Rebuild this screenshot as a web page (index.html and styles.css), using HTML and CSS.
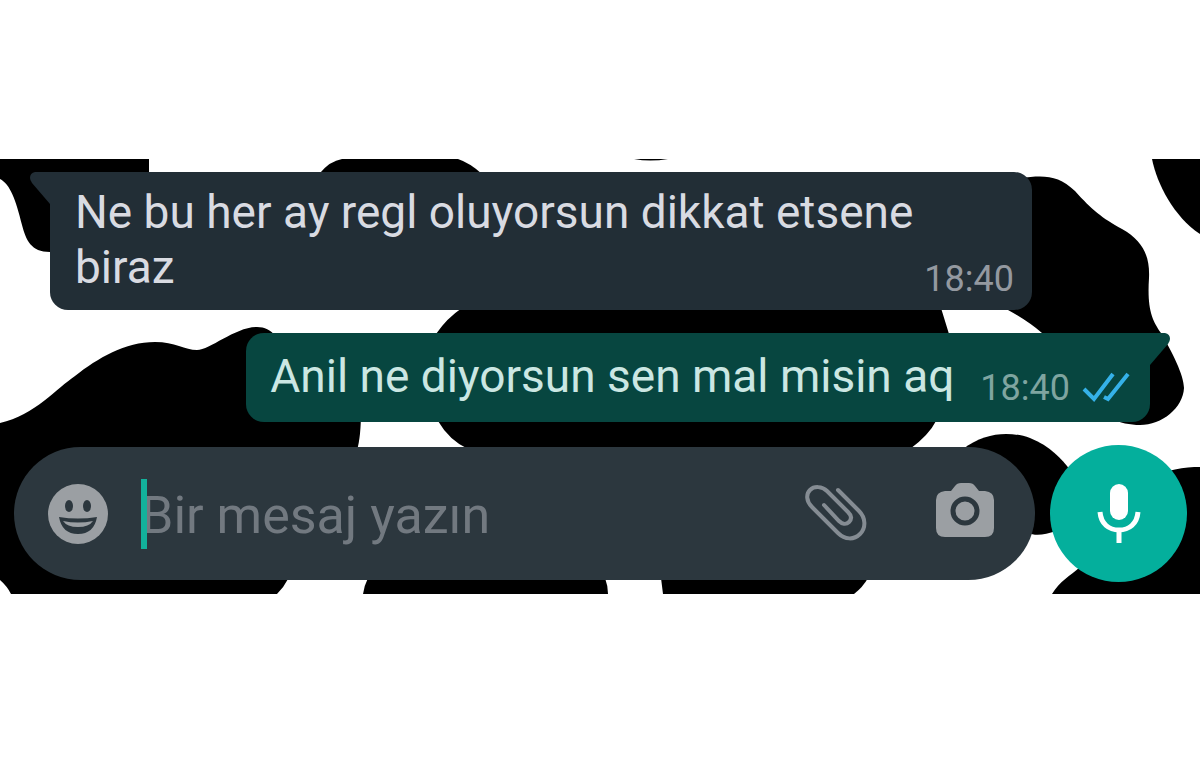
FILE: index.html
```html
<!DOCTYPE html>
<html lang="tr">
<head>
<meta charset="utf-8">
<meta name="viewport" content="width=device-width, initial-scale=1">
<title>Sohbet</title>
<link rel="stylesheet" href="styles.css">
</head>
<body>
<main class="chat">
  <svg class="wallpaper" viewBox="0 159 1200 435" preserveAspectRatio="none" aria-hidden="true">
    <path d="M0 159H149V176L70 200V252H50C31 252 26 240 22 225C16 200 10 184 0 179Z"/>
    <path d="M320 173Q330 161 342 159H458Q470 163 482 174V180H320Z"/>
    <path d="M634 159Q650 162 668 159Z"/>
    <path d="M1152 159H1200V234C1174 217 1157 184 1152 159Z"/>
    <path d="M1020 178C1045 175 1058 175 1075 191C1092 210 1102 218 1122 229C1143 241 1150 256 1149 278C1147 309 1152 320 1161 333C1172 352 1184 375 1184 388C1183 408 1162 425 1140 425C1130 425 1120 423 1110 418L1060 350L1042 333Q1028 321 1008 310L990 250Z"/>
    <path d="M436 334Q447 318 462 308H941Q945 321 949 334V400L936 421Q929 435 910 449H468Q449 440 438 421Z"/>
    <path d="M0 423C35 415 57 388 75 376C98 358 125 342 155 342C175 342 185 350 197 350C210 350 235 327 257 327C265 327 270 330 276 336L300 410H361Q361 437 357 450L330 520L288 579Q284 587 277 594H11Q7 586 0 580Z"/>
    <path d="M363 594Q364 586 368 578H605Q608 586 608 594Z"/>
    <path d="M661 578Q662 586 663 594H854Q863 587 868 578Z"/>
    <path d="M963 449C985 432 1010 431 1030 438C1050 446 1062 459 1070 470L1056 531C1045 535 1035 536 1028 533L980 500Z"/>
    <path d="M1052 594C1060 581 1070 576 1080 567L1150 480C1165 469 1185 467 1200 467V594Z"/>
  </svg>

  <section class="messages">
    <article class="bubble bubble-in">
      <svg class="tail tail-in" viewBox="0 0 20 32" aria-hidden="true"><path d="M20 0H5Q0 1 0 6Q0 8 2 11L20 32Z"/></svg>
      <p class="text">Ne bu her ay regl oluyorsun dikkat etsene biraz</p>
      <time class="time" datetime="18:40">18:40</time>
    </article>
    <article class="bubble bubble-out">
      <svg class="tail tail-out" viewBox="0 0 20 32" aria-hidden="true"><path d="M0 0H15Q20 1 20 6Q20 8 18 11L0 32Z"/></svg>
      <p class="text">Anil ne diyorsun sen mal misin aq</p>
      <div class="meta">
        <time class="time" datetime="18:40">18:40</time>
        <svg class="ticks" viewBox="0 0 48 32" role="img" aria-label="Okundu"><path d="M2 17L12 27L31 2M22 25L26 27L46 2"/></svg>
      </div>
    </article>
  </section>

  <form class="composer">
    <div class="field">
      <button class="icon-button" type="button" aria-label="Emoji">
        <svg class="emoji" viewBox="0 0 60 60"><circle class="solid" cx="30" cy="30" r="30"/><ellipse class="cut" cx="21" cy="22" rx="4" ry="6"/><ellipse class="cut" cx="39" cy="22" rx="4" ry="6"/><path class="cut" d="M11 33Q30 36 49 33Q46 50 30 50Q14 50 11 33Z"/><path class="solid" d="M15 37Q30 40 45 37Q41 43 30 43Q19 43 15 37Z"/></svg>
      </button>
      <div class="entry">
        <span class="caret"></span>
        <input class="input" type="text" placeholder="Bir mesaj yazın" aria-label="Bir mesaj yazın">
      </div>
      <button class="icon-button" type="button" aria-label="Dosya ekle">
        <svg class="clip" viewBox="0 0 62 58"><path d="M33 5L54 26C61 33 61 43 55 49C49 55 40 55 33 48L7 22C1 16 1 9 5 5C9 1 17 1 22 6L43 27C47 31 47 34 44 37C41 40 37 39 34 36L19 20"/></svg>
      </button>
      <button class="icon-button" type="button" aria-label="Kamera">
        <svg class="camera" viewBox="0 0 58 62"><path class="solid" d="M9 8H15L19 3Q21 0 25 0H33Q37 0 39 3L43 8H49Q58 9 58 17V45Q58 54 49 54H9Q0 54 0 45V17Q0 9 9 8Z"/><circle class="ring" cx="29" cy="28" r="12"/></svg>
      </button>
    </div>
    <button class="mic-button" type="button" aria-label="Sesli mesaj">
      <svg class="mic" viewBox="0 0 44 60"><rect class="mic-body" x="13" y="0" width="18" height="36" rx="9"/><path class="mic-stand" d="M3 28C4 40 12 46 22 46C32 46 40 40 41 28M22 46V59"/></svg>
    </button>
  </form>
</main>
</body>
</html>
```
FILE: styles.css
```css
* {
  box-sizing: border-box;
}

body {
  margin: 0;
  padding: 159px 0;
  background: #fff;
  font-family: Roboto, "Liberation Sans", sans-serif;
}

.chat {
  position: relative;
  padding: 13px 13px 12px 14px;
  overflow: hidden;
}

.wallpaper {
  position: absolute;
  inset: 0;
  width: 100%;
  height: 100%;
}

.messages {
  position: relative;
  display: flex;
  flex-direction: column;
  gap: 23px;
  padding: 0 37px 0 36px;
}

.bubble {
  position: relative;
  display: flex;
  align-items: flex-end;
  border-radius: 18px;
}

.bubble-in {
  align-self: flex-start;
  max-width: 982px;
  padding: 13px 18px 15px 25px;
  border-top-left-radius: 0;
  background: #222e36;
  color: #d9dbe2;
}

.bubble-out {
  align-self: flex-end;
  gap: 26px;
  padding: 16px 20px 18px 24px;
  border-top-right-radius: 0;
  background: #074640;
  color: #cbe7e3;
}

.tail {
  position: absolute;
  top: 0;
  width: 20px;
  height: 32px;
}

.tail-in {
  right: 100%;
  fill: #222e36;
}

.tail-out {
  left: 100%;
  fill: #074640;
}

.text {
  flex: 1;
  margin: 0;
  font-size: 46px;
  line-height: 55px;
}

.time {
  font-size: 36px;
  line-height: 32px;
  color: #9499a0;
}

.meta {
  display: flex;
  align-items: center;
  gap: 12px;
}

.meta .time {
  color: #7fa5a0;
}

.ticks {
  width: 48px;
  height: 32px;
  fill: none;
  stroke: #35b1e8;
  stroke-width: 4;
}

.composer {
  position: relative;
  display: flex;
  align-items: center;
  gap: 15px;
  margin-top: 23px;
}

.field {
  flex: 1;
  display: flex;
  align-items: center;
  min-width: 0;
  height: 133px;
  padding: 0 41px 0 34px;
  border-radius: 67px;
  background: #2c373e;
}

.icon-button,
.mic-button {
  display: flex;
  align-items: center;
  justify-content: center;
  flex: none;
  border: 0;
  padding: 0;
  background: none;
}

.emoji {
  width: 60px;
  height: 60px;
}

.solid {
  fill: #9b9fa3;
}

.cut {
  fill: #2c373e;
}

.clip {
  width: 62px;
  height: 58px;
  margin-right: 69px;
  fill: none;
  stroke: #858c93;
  stroke-width: 4;
  stroke-linecap: round;
}

.camera {
  width: 58px;
  height: 62px;
}

.ring {
  fill: none;
  stroke: #2c373e;
  stroke-width: 5;
}

.entry {
  position: relative;
  flex: 1;
  min-width: 0;
  margin-left: 33px;
}

.caret {
  position: absolute;
  top: 0;
  left: 0;
  width: 6px;
  height: 70px;
  background: #12b19b;
}

.input {
  display: block;
  width: 100%;
  height: 70px;
  border: 0;
  padding: 4px 0 0;
  outline: 0;
  background: none;
  color: #d9dbe2;
  font: 52px Roboto, "Liberation Sans", sans-serif;
}

.input::placeholder {
  color: #727980;
  opacity: 1;
}

.mic-button {
  width: 137px;
  height: 137px;
  border-radius: 50%;
  background: #04af9c;
}

.mic {
  width: 44px;
  height: 60px;
}

.mic-body {
  fill: #fff;
}

.mic-stand {
  fill: none;
  stroke: #fff;
  stroke-width: 5;
}
```
